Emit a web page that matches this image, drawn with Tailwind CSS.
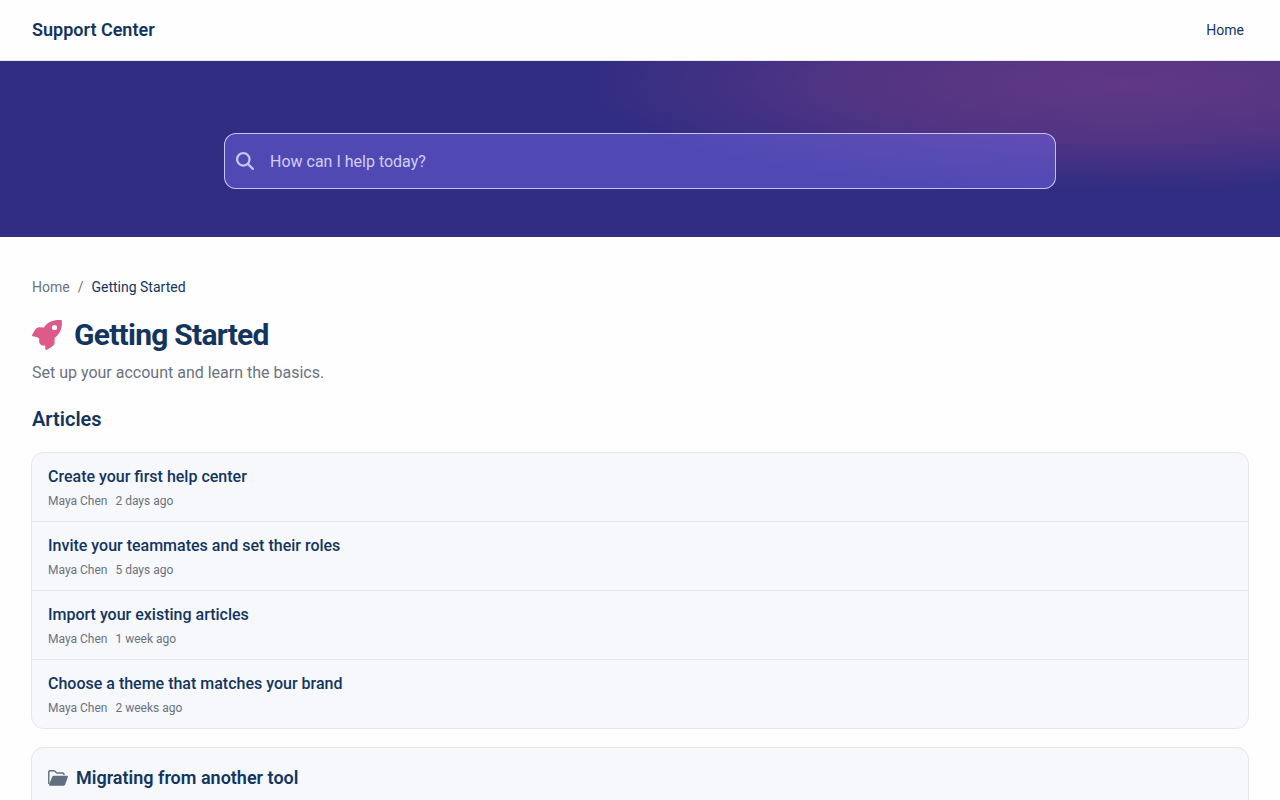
<!DOCTYPE html>
<html lang="en">

<head>
    <meta charset="UTF-8">
    <meta name="viewport" content="width=device-width, initial-scale=1.0">
    <title>Getting Started - Support Center</title>
    <script src="https://cdn.jsdelivr.net/npm/@tailwindcss/browser@4"></script>
</head>

<body class="bg-[#fefefe] font-['Roboto',sans-serif] text-[#12355f]">
    <header class="flex items-center justify-between px-8 py-4 border-b border-[#e5e7eb]">
        <a href="#" class="text-lg font-semibold">Support Center</a>
        <nav class="px-1">
            <a href="#" class="text-sm">Home</a>
        </nav>
    </header>

    <section class="px-8 pt-18 pb-12 bg-[#302d83] bg-[radial-gradient(ellipse_43%_61%_at_88%_13%,#613884,#513483_52%,#302d83)]">
        <form class="mx-auto max-w-[832px]" role="search">
            <div class="flex items-center h-14 px-3 gap-4 rounded-xl inset-ring inset-ring-[#c7c2f0] bg-[#6f66e6]/50">
                <label for="search" class="text-[#c7c5f5]">
                    <svg class="size-[18px]" viewBox="0 0 512 512" fill="currentColor" role="img" aria-label="Search">
                        <path d="M416 208c0 45.900-14.900 88.300-40 122.700L502.600 457.400c12.500 12.500 12.500 32.800 0 45.300s-32.800 12.500-45.300 0L330.700 376c-34.400 25.200-76.800 40-122.700 40C93.100 416 0 322.900 0 208S93.100 0 208 0S416 93.100 416 208zM208 352a144 144 0 1 0 0-288 144 144 0 1 0 0 288z" />
                    </svg>
                </label>
                <input type="text" id="search" placeholder="How can I help today?"
                    class="flex-1 h-full bg-transparent text-white placeholder:text-[#d0cef5] outline-none">
            </div>
        </form>
    </section>

    <main class="px-8 py-10">
        <nav class="flex gap-2 text-sm" aria-label="Breadcrumb">
            <a href="#" class="text-[#6b7280]">Home</a>
            <span class="text-[#6b7280]">/</span>
            <span>Getting Started</span>
        </nav>

        <div class="flex items-center gap-3 mt-5">
            <svg class="size-[30px] text-[#dd5b88]" viewBox="0 0 30 30" fill="currentColor">
                <path fill-rule="evenodd" d="M.2 14.800C1.600 11.800 3.200 9.300 4.800 8Q5.800 7.200 7 7.200L12 7.400C15.500 2 21.500-.3 28.800.1Q29.900.2 29.900 1.200C30.300 8.500 28 14.300 22.600 18V23Q22.600 24.200 21.800 25.100C20.300 26.700 17.700 28.400 14.900 29.800Q13.300 30.300 13.200 28.800V25.600C10.400 26.300 7.300 24.600 7 21.500Q6.900 20.300 7.500 19L5.500 17.300L1 16.300Q-.3 16 .2 14.800ZM22.500 10.100a2.600 2.600 0 1 0 0-5.200a2.600 2.600 0 1 0 0 5.200Z" />
            </svg>
            <h1 class="text-3xl font-bold tracking-tight">Getting Started</h1>
        </div>
        <p class="mt-2 text-[#6b7280]">Set up your account and learn the basics.</p>

        <h2 class="mt-5 text-xl font-semibold">Articles</h2>
        <ul class="mt-5 rounded-xl bg-[#f6f8fc] ring-1 ring-[#e5e7eb] divide-y divide-[#e5e7eb]">
            <li>
                <a href="#" class="block px-4 py-3">
                    <h3 class="font-medium">Create your first help center</h3>
                    <p class="flex gap-2 mt-1 text-xs text-[#6b7280]"><span>Maya Chen</span><span>2 days ago</span></p>
                </a>
            </li>
            <li>
                <a href="#" class="block px-4 py-3">
                    <h3 class="font-medium">Invite your teammates and set their roles</h3>
                    <p class="flex gap-2 mt-1 text-xs text-[#6b7280]"><span>Maya Chen</span><span>5 days ago</span></p>
                </a>
            </li>
            <li>
                <a href="#" class="block px-4 py-3">
                    <h3 class="font-medium">Import your existing articles</h3>
                    <p class="flex gap-2 mt-1 text-xs text-[#6b7280]"><span>Maya Chen</span><span>1 week ago</span></p>
                </a>
            </li>
            <li>
                <a href="#" class="block px-4 py-3">
                    <h3 class="font-medium">Choose a theme that matches your brand</h3>
                    <p class="flex gap-2 mt-1 text-xs text-[#6b7280]"><span>Maya Chen</span><span>2 weeks ago</span></p>
                </a>
            </li>
        </ul>

        <section class="mt-5 px-4 pt-4 pb-12 rounded-xl bg-[#f6f8fc] ring-1 ring-[#e5e7eb]">
            <div class="flex items-center gap-2">
                <svg class="w-5 h-4 text-[#5f6f7e]" viewBox="0 0 20 16" fill="currentColor">
                    <path d="M.8 14V2Q.8 .8 2 .8H5.800Q6.500 .8 7 1.300L8.200 2.500Q8.700 3 9.500 3H14.500Q16 3 16 4.500V5" fill="none" stroke="currentColor" stroke-width="1.400" stroke-linejoin="round" />
                    <path d="M6 5.800H19Q20.200 5.800 19.800 6.900L17.200 14.400Q16.800 15.800 15.400 15.800H2Q.6 15.800 1.200 14.300L4 7.200Q4.500 5.800 6 5.800Z" />
                </svg>
                <h2 class="text-lg font-semibold">Migrating from another tool</h2>
            </div>
        </section>
    </main>
</body>

</html>
